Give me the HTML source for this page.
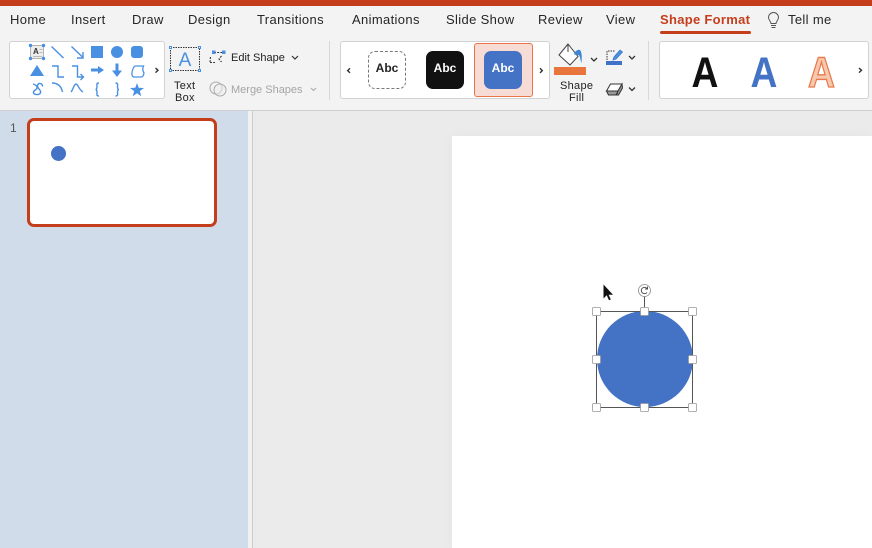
<!DOCTYPE html>
<html>
<head>
<meta charset="utf-8">
<style>
html,body{margin:0;padding:0;width:872px;height:548px;overflow:hidden;background:#ebebeb}
body{position:relative;font-family:"Liberation Sans",sans-serif;color:#222}
.a{position:absolute}
.t{position:absolute;font-size:13px;line-height:16px;white-space:nowrap;letter-spacing:.35px;color:#262626;top:12px}
.s{position:absolute;font-size:11px;line-height:14px;white-space:nowrap;color:#222;letter-spacing:0}
.box{position:absolute;background:#fff;border:1px solid #d2d2d2;border-radius:3px;box-sizing:border-box}
svg{position:absolute;overflow:visible}
.abc{position:absolute;top:51px;width:38px;height:38px;box-sizing:border-box;border-radius:7px;text-align:center;font:bold 12px/34px "Liberation Sans",sans-serif}
</style>
</head>
<body>
<div class="a" style="left:0;top:0;width:872px;height:110px;background:#f3f3f3"></div>
<div class="a" style="left:0;top:0;width:872px;height:6px;background:#c43e1c"></div>
<div class="a" style="left:0;top:110px;width:872px;height:1px;background:#cfcfcf"></div>

<div class="t" style="left:10px">Home</div>
<div class="t" style="left:71px">Insert</div>
<div class="t" style="left:132px">Draw</div>
<div class="t" style="left:188px">Design</div>
<div class="t" style="left:257px">Transitions</div>
<div class="t" style="left:352px">Animations</div>
<div class="t" style="left:446px">Slide Show</div>
<div class="t" style="left:538px">Review</div>
<div class="t" style="left:606px">View</div>
<div class="t" style="left:660px;color:#c43e1c;font-weight:bold;letter-spacing:.3px">Shape Format</div>
<div class="a" style="left:660px;top:31px;width:91px;height:3px;background:#c43e1c;border-radius:2px"></div>
<svg style="left:0;top:0" width="872" height="110">
<path d="M771.500 27.500h4M771 25.500h5M771 23.500c0-2-2.500-3.500-2.500-6a5 5 0 0 1 10 0c0 2.500-2.500 4-2.500 6z" fill="none" stroke="#555" stroke-width="1"/>
</svg>
<div class="t" style="left:788px">Tell me</div>

<div class="box" style="left:9px;top:41px;width:156px;height:58px"></div>
<svg style="left:0;top:0" width="340" height="110" fill="none">
<rect x="30.500" y="45.500" width="13" height="13" fill="#eee" stroke="#999" stroke-width=".7"/>
<text x="33" y="54" font-size="8" font-family="Liberation Sans" font-weight="bold" fill="#333">A</text>
<path d="M39.500 49.500h3M39.500 52.500h3M33 56.500h9" stroke="#bbb"/>
<g fill="#4a90e2"><circle cx="30.500" cy="45.500" r="1.700"/><circle cx="43.500" cy="45.500" r="1.700"/><circle cx="30.500" cy="58.500" r="1.700"/><circle cx="43.500" cy="58.500" r="1.700"/></g>
<g stroke="#4a90e2" stroke-width="1.400">
<path d="M51.500 46.500L63.500 58"/>
<path d="M71.500 46.500L83 57.500M83 52v6h-6"/>
<path d="M52 66h6v11h6"/>
<path d="M72 66h5.500v11h5M80.500 74l3 3-3 3"/>
<path d="M33 84c3.500 1 5 3 3.500 5-2 1.500-3.500 2.500-3 4 .5 1.500 4 2 6 1 2-1.500 1-3.500-.5-5-2-2-2-4.500 0-5.500 2-.5 3.500 1 3.500 3"/>
<path d="M52 83c5 0 9 2 10.500 9"/>
<path d="M71 92c2-2 3-8 5-8s3 6 7 8"/>
<path d="M99 83c-3 0-2 2-2 3.500s0 3-1.500 3c1.500 0 1.500 1.500 1.500 3s-1 3.500 2 3.500"/>
<path d="M115.500 83c3 0 2 2 2 3.500s0 3 1.500 3c-1.500 0-1.500 1.500-1.500 3s1 3.500-2 3.500"/>
<path d="M132 73c0-3 2-7 3.500-7h8c-1.500 3-.5 5 .5 7-.5 2.500-1 4-3 4h-7c-1.500 0-2.500-2-2-4z" stroke-width="1.300"/>
</g>
<g fill="#4a90e2">
<rect x="91" y="46" width="12" height="12"/>
<circle cx="117" cy="52" r="6"/>
<rect x="131" y="46" width="12" height="12" rx="3"/>
<path d="M37 65l7 11H30z"/>
<path d="M91 68.500h7V66l6 4-6 4v-2.500h-7z"/>
<path d="M115.500 63.500h3v7h3.500l-5 6.500-5-6.500h3.500z"/>
<path d="M137 83l1.700 4.800 5.300.2-4.200 3.100 1.500 5.100-4.300-3-4.300 3 1.500-5.100-4.200-3.100 5.300-.2z"/>
</g>
<path d="M155.500 68l2.500 2.300-2.500 2.300" stroke="#333" stroke-width="1.400"/>
<rect x="170.500" y="47.500" width="29" height="23" stroke="#333" stroke-dasharray="1.500 1"/>
<text x="185" y="66" text-anchor="middle" font-size="19" font-family="Liberation Sans" fill="#4a90e2">A</text>
<g fill="#fff" stroke="#4a90e2"><rect x="169.500" y="46.500" width="2" height="2"/><rect x="198.500" y="46.500" width="2" height="2"/><rect x="169.500" y="69.500" width="2" height="2"/><rect x="198.500" y="69.500" width="2" height="2"/></g>
<path d="M214 52.500h8M221.500 56l-2.500 3 2.500 3M210.500 57l-.5 5M210 62.500h5" stroke="#333" stroke-width="1.100" stroke-dasharray="2 1.200"/>
<g fill="#4a90e2"><rect x="212" y="50.500" width="3.500" height="3.500"/><rect x="222" y="50.500" width="3.500" height="3.500"/></g>
<path d="M292 56l3 3 3-3" stroke="#333" stroke-width="1.200"/>
<circle cx="216" cy="88" r="6" stroke="#aaa" stroke-width="1"/><circle cx="220" cy="90" r="6" stroke="#aaa" stroke-width="1" fill="#eee" fill-opacity=".5"/>
<path d="M311 88l2.500 2.500 2.500-2.500" stroke="#aaa" stroke-width="1.100"/>
<path d="M329.500 41v59" stroke="#d8d8d8"/>
</svg>
<div class="s" style="left:174px;top:79px;letter-spacing:.3px">Text</div>
<div class="s" style="left:175px;top:91px;letter-spacing:.3px">Box</div>
<div class="s" style="left:231px;top:51px">Edit Shape</div>
<div class="s" style="left:231px;top:83px;color:#a5a5a5">Merge Shapes</div>

<div class="box" style="left:340px;top:41px;width:210px;height:58px"></div>
<div class="a" style="left:474px;top:43px;width:59px;height:54px;box-sizing:border-box;background:#f7dcd6;border:1px solid #e8764a;border-radius:3px"></div>
<div class="abc" style="left:368px;background:#fff;border:1px dashed #777;line-height:32px;color:#222">Abc</div>
<div class="abc" style="left:426px;background:#111;color:#fff">Abc</div>
<div class="abc" style="left:484px;background:#4472c4;color:#fff">Abc</div>
<svg style="left:0;top:0" width="872" height="110" fill="none">
<path d="M350 68.300l-2.300 2.300 2.300 2.300M540 68.300l2.300 2.300-2.300 2.300" stroke="#333" stroke-width="1.400"/>
<path d="M568 44l-9 11 11 10 8-8.500zM568 44v8" stroke="#444" stroke-width="1" fill="#fff"/>
<path d="M574 54c1-3 4-5 6-4 2 2 2 8 1.500 13-1.500-3-1-7-3-8-2-.5-3 .5-4.500-1z" fill="#3f87d6"/>
<rect x="554" y="67" width="32" height="8" fill="#e8763c"/>
<path d="M591 58l3 3 3-3M629 56l3 3 3-3M629 87.500l3 3 3-3" stroke="#333" stroke-width="1.300"/>
<rect x="606" y="61" width="16" height="4" fill="#3f72c8"/>
<path d="M607 60v-9h8" stroke="#333" stroke-dasharray="1.500 1"/>
<path d="M613 60l1-3 6-7 2.500 2-6.500 7z" fill="#4a90e2" stroke="#3a78c8" stroke-width=".8"/>
<path d="M606.500 91l4-7h11.500l-4 7z" stroke="#333" fill="#fff"/>
<path d="M606.500 91l2 4h8l1.500-4zM618 91l4-7 .5 4-4 7h-2.500z" stroke="#333" fill="#999"/>
<path d="M648.500 41v59" stroke="#d8d8d8"/>
</svg>
<div class="s" style="left:560px;top:79px;letter-spacing:.3px">Shape</div>
<div class="s" style="left:569px;top:91px;letter-spacing:.3px">Fill</div>

<div class="box" style="left:659px;top:41px;width:210px;height:58px"></div>
<svg style="left:0;top:0" width="872" height="110">
<g font-family="Liberation Sans" font-weight="bold" font-size="38" text-anchor="middle" style="text-rendering:geometricPrecision">
<text transform="translate(705 87) scale(.98 1.130)" fill="#111">A</text>
<text transform="translate(764 87) scale(.98 1.130)" fill="#4472c4">A</text>
<text transform="translate(821.500 87) scale(.98 1.130)" fill="#f7c7ae" stroke="#e8794a" stroke-width="1.200">A</text>
</g>
<path d="M859 68l2.500 2.300-2.500 2.300" fill="none" stroke="#333" stroke-width="1.400"/>
</svg>

<div class="a" style="left:0;top:111px;width:248px;height:437px;background:#d0dcea"></div>
<div class="a" style="left:248px;top:111px;width:4px;height:437px;background:#f1f1f1"></div>
<div class="a" style="left:252px;top:111px;width:1px;height:437px;background:#cbcbcb"></div>
<div class="a" style="left:10px;top:121px;font-size:12px;line-height:14px;color:#555">1</div>
<div class="a" style="left:27px;top:117.500px;width:190px;height:109.500px;box-sizing:border-box;background:#fff;border:3px solid #c43e1c;border-radius:7px"></div>
<div class="a" style="left:51px;top:145.500px;width:15px;height:15px;border-radius:50%;background:#4472c4"></div>

<div class="a" style="left:452px;top:136px;width:420px;height:412px;background:#fff;box-shadow:0 0 14px rgba(0,0,0,.035)"></div>
<svg style="left:0;top:0" width="872" height="548">
<path d="M603.500 284.500v14l3.200-3.200 2.300 5 1.800-.8-2.200-4.800h4.400z" fill="#111"/>
<circle cx="645" cy="359" r="48" fill="#4472c4"/>
<path d="M644.500 296v15" stroke="#555"/>
<rect x="596.500" y="311.500" width="96" height="96" fill="none" stroke="#555"/>
<circle cx="644.500" cy="290.500" r="6" fill="#fff" stroke="#888" stroke-width=".8"/>
<path d="M647 292.500a3.200 3.200 0 1 1 0-4M647.500 286.500v2.500h-2.500" fill="none" stroke="#444" stroke-width=".9"/>
<g fill="#fff" stroke="#999" stroke-width=".8">
<rect x="592.500" y="307.500" width="8" height="8" rx="1"/><rect x="640.500" y="307.500" width="8" height="8" rx="1"/><rect x="688.500" y="307.500" width="8" height="8" rx="1"/>
<rect x="592.500" y="355.500" width="8" height="8" rx="1"/><rect x="688.500" y="355.500" width="8" height="8" rx="1"/>
<rect x="592.500" y="403.500" width="8" height="8" rx="1"/><rect x="640.500" y="403.500" width="8" height="8" rx="1"/><rect x="688.500" y="403.500" width="8" height="8" rx="1"/>
</g>
</svg>
</body>
</html>
